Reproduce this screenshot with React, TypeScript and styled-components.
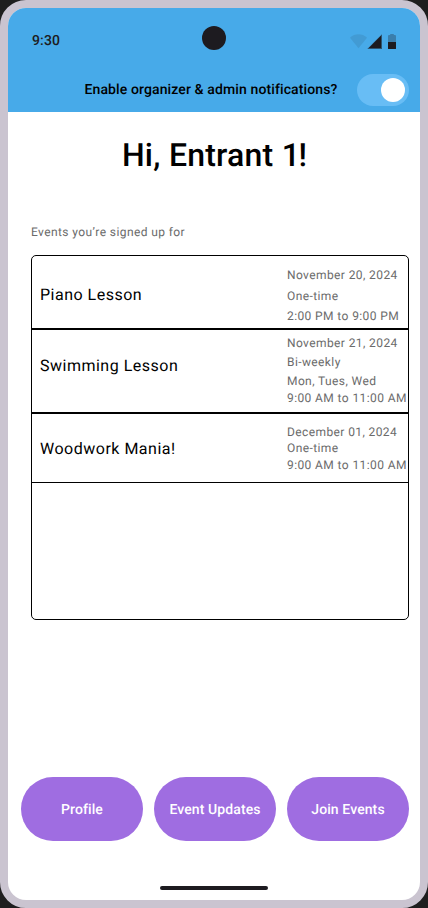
import React, { useState } from "react";
import styled, { createGlobalStyle } from "styled-components";

const GlobalStyle = createGlobalStyle`
  *, *::before, *::after { box-sizing: border-box; }
  html, body { margin: 0; padding: 0; background: #1e1e1e; }
  body {
    font-family: Roboto, "Liberation Sans", sans-serif;
    text-rendering: geometricPrecision;
  }
`;

const Device = styled.main`
  width: 428px;
  height: 908px;
  border: 8px solid #cac4d0;
  border-radius: 26px;
  background: #cac4d0;
`;

const Screen = styled.div`
  display: flex;
  flex-direction: column;
  height: 100%;
  border-radius: 18px;
  background: #ffffff;
  overflow: hidden;
`;

const Header = styled.header`
  flex: none;
  height: 104px;
  background: #47aae9;
`;

const StatusBar = styled.div`
  display: grid;
  grid-template-columns: 1fr 24px 1fr;
  align-items: center;
  height: 60px;
  padding: 0 24px;
`;

const Clock = styled.span`
  padding-top: 6px;
  font-size: 14px;
  font-weight: 500;
  line-height: 20px;
  letter-spacing: 0.14px;
  color: #1d1b20;
`;

const Camera = styled.span`
  width: 24px;
  height: 24px;
  border-radius: 50%;
  background: #1d1b20;
`;

const StatusIcons = styled.svg`
  justify-self: end;
  width: 46px;
  height: 16px;
  margin-top: 6px;
`;

const NotificationRow = styled.label`
  display: flex;
  align-items: center;
  justify-content: flex-end;
  gap: 19.5px;
  height: 32px;
  margin-top: 6px;
  padding-right: 11px;
`;

const NotificationText = styled.span`
  font-size: 14px;
  font-weight: 500;
  line-height: 20px;
  letter-spacing: 0.12px;
  color: #000000;
`;

const Toggle = styled.button<{ $on: boolean }>`
  display: flex;
  align-items: center;
  justify-content: ${(p) => (p.$on ? "flex-end" : "flex-start")};
  width: 52px;
  height: 32px;
  padding: 0 4px;
  border: 0;
  border-radius: 16px;
  background: #68bdf5;
`;

const ToggleThumb = styled.span`
  width: 24px;
  height: 24px;
  border-radius: 50%;
  background: #ffffff;
`;

const Greeting = styled.h1`
  margin: 23px 0 0;
  padding-left: 1px;
  font-size: 32px;
  font-weight: 500;
  line-height: 40px;
  letter-spacing: 0.2px;
  word-spacing: 0.3px;
  text-align: center;
  color: #000000;
`;

const GuestNumber = styled.span`
  letter-spacing: -1.6px;
`;

const Events = styled.section`
  margin: 49px 11px 0 23px;
`;

const SectionLabel = styled.h2`
  margin: 0 0 15px;
  font-size: 12px;
  font-weight: 400;
  line-height: 16px;
  letter-spacing: 0.4px;
  color: #6b6b6b;
`;

const EventList = styled.ul`
  height: 365px;
  margin: 0;
  padding: 0;
  border: 1px solid #000000;
  border-radius: 5px;
  list-style: none;
`;

const EventRow = styled.li<{ $height: number; $rule: number }>`
  display: grid;
  grid-template-columns: 247px 1fr;
  height: ${(p) => p.$height}px;
  padding-left: 8px;
  border-bottom: ${(p) => p.$rule}px solid #000000;
`;

const EventName = styled.span<{ $top: number }>`
  margin-top: ${(p) => p.$top}px;
  font-size: 16px;
  line-height: 24px;
  letter-spacing: 0.5px;
  color: #000000;
`;

const EventDetails = styled.div`
  display: flex;
  flex-direction: column;
  white-space: nowrap;
`;

const DetailLine = styled.span<{ $gap: number }>`
  margin-top: ${(p) => p.$gap}px;
  font-size: 12px;
  line-height: 16px;
  letter-spacing: 0.4px;
  color: #6b6b6b;
`;

const Actions = styled.nav`
  display: flex;
  justify-content: space-between;
  margin: auto 11px 0 13px;
`;

const ActionButton = styled.button`
  width: 122px;
  height: 64px;
  padding: 2px 0 0;
  border: 0;
  border-radius: 32px;
  background: #9f6de1;
  font-family: inherit;
  font-size: 14px;
  font-weight: 500;
  line-height: 20px;
  letter-spacing: 0.1px;
  text-rendering: inherit;
  color: #ffffff;
`;

const HomeIndicator = styled.div`
  flex: none;
  width: 108px;
  height: 4px;
  margin: 45px auto 10px;
  border-radius: 2px;
  background: #1d1b20;
`;

type EventItem = {
  name: string;
  nameTop: number;
  height: number;
  rule: number;
  details: [text: string, gap: number][];
};

const events: EventItem[] = [
  {
    name: "Piano Lesson",
    nameTop: 27,
    height: 74,
    rule: 2,
    details: [
      ["November 20, 2024", 11],
      ["One-time", 5],
      ["2:00 PM to 9:00 PM", 4],
    ],
  },
  {
    name: "Swimming Lesson",
    nameTop: 24,
    height: 84,
    rule: 2,
    details: [
      ["November 21, 2024", 5],
      ["Bi-weekly", 3],
      ["Mon, Tues, Wed", 3],
      ["9:00 AM to 11:00 AM", 1],
    ],
  },
  {
    name: "Woodwork Mania!",
    nameTop: 23,
    height: 69,
    rule: 1,
    details: [
      ["December 01, 2024", 10],
      ["One-time", 0],
      ["9:00 AM to 11:00 AM", 1],
    ],
  },
];

const actions = ["Profile", "Event Updates", "Join Events"];

export default function App() {
  const [notify, setNotify] = useState(true);

  return (
    <>
      <GlobalStyle />
      <Device>
        <Screen>
          <Header>
            <StatusBar>
              <Clock>9:30</Clock>
              <Camera />
              <StatusIcons viewBox="0 0 46 16" aria-hidden="true">
                <path d="M0 4.8C4.6 .2 12.4 .2 17 4.8L8.5 15.2Z" fill="#1d1b20" fillOpacity="0.1" />
                <path d="M17.3 16L32 1.3V16Z" fill="#1d1b20" fillOpacity="0.6" />
                <path d="M18.8 15L31 2.8V15Z" fill="#1d1b20" />
                <path d="M38 9V3q0-1 1-1h1.2V1h3.6v1H45q1 0 1 1v6Z" fill="#1d1b20" fillOpacity="0.3" />
                <path d="M38 9h8v6.4q0 .6-.6 .6h-6.8q-.6 0-.6-.6Z" fill="#1d1b20" />
              </StatusIcons>
            </StatusBar>
            <NotificationRow>
              <NotificationText>Enable organizer &amp; admin notifications?</NotificationText>
              <Toggle
                type="button"
                role="switch"
                aria-checked={notify}
                $on={notify}
                onClick={() => setNotify(!notify)}
              >
                <ToggleThumb />
              </Toggle>
            </NotificationRow>
          </Header>
          <Greeting>
            Hi, Entrant <GuestNumber>1</GuestNumber>!
          </Greeting>
          <Events>
            <SectionLabel>Events you’re signed up for</SectionLabel>
            <EventList>
              {events.map((event) => (
                <EventRow key={event.name} $height={event.height} $rule={event.rule}>
                  <EventName $top={event.nameTop}>{event.name}</EventName>
                  <EventDetails>
                    {event.details.map(([text, gap]) => (
                      <DetailLine key={text} $gap={gap}>
                        {text}
                      </DetailLine>
                    ))}
                  </EventDetails>
                </EventRow>
              ))}
            </EventList>
          </Events>
          <Actions>
            {actions.map((label) => (
              <ActionButton key={label} type="button">
                {label}
              </ActionButton>
            ))}
          </Actions>
          <HomeIndicator />
        </Screen>
      </Device>
    </>
  );
}
